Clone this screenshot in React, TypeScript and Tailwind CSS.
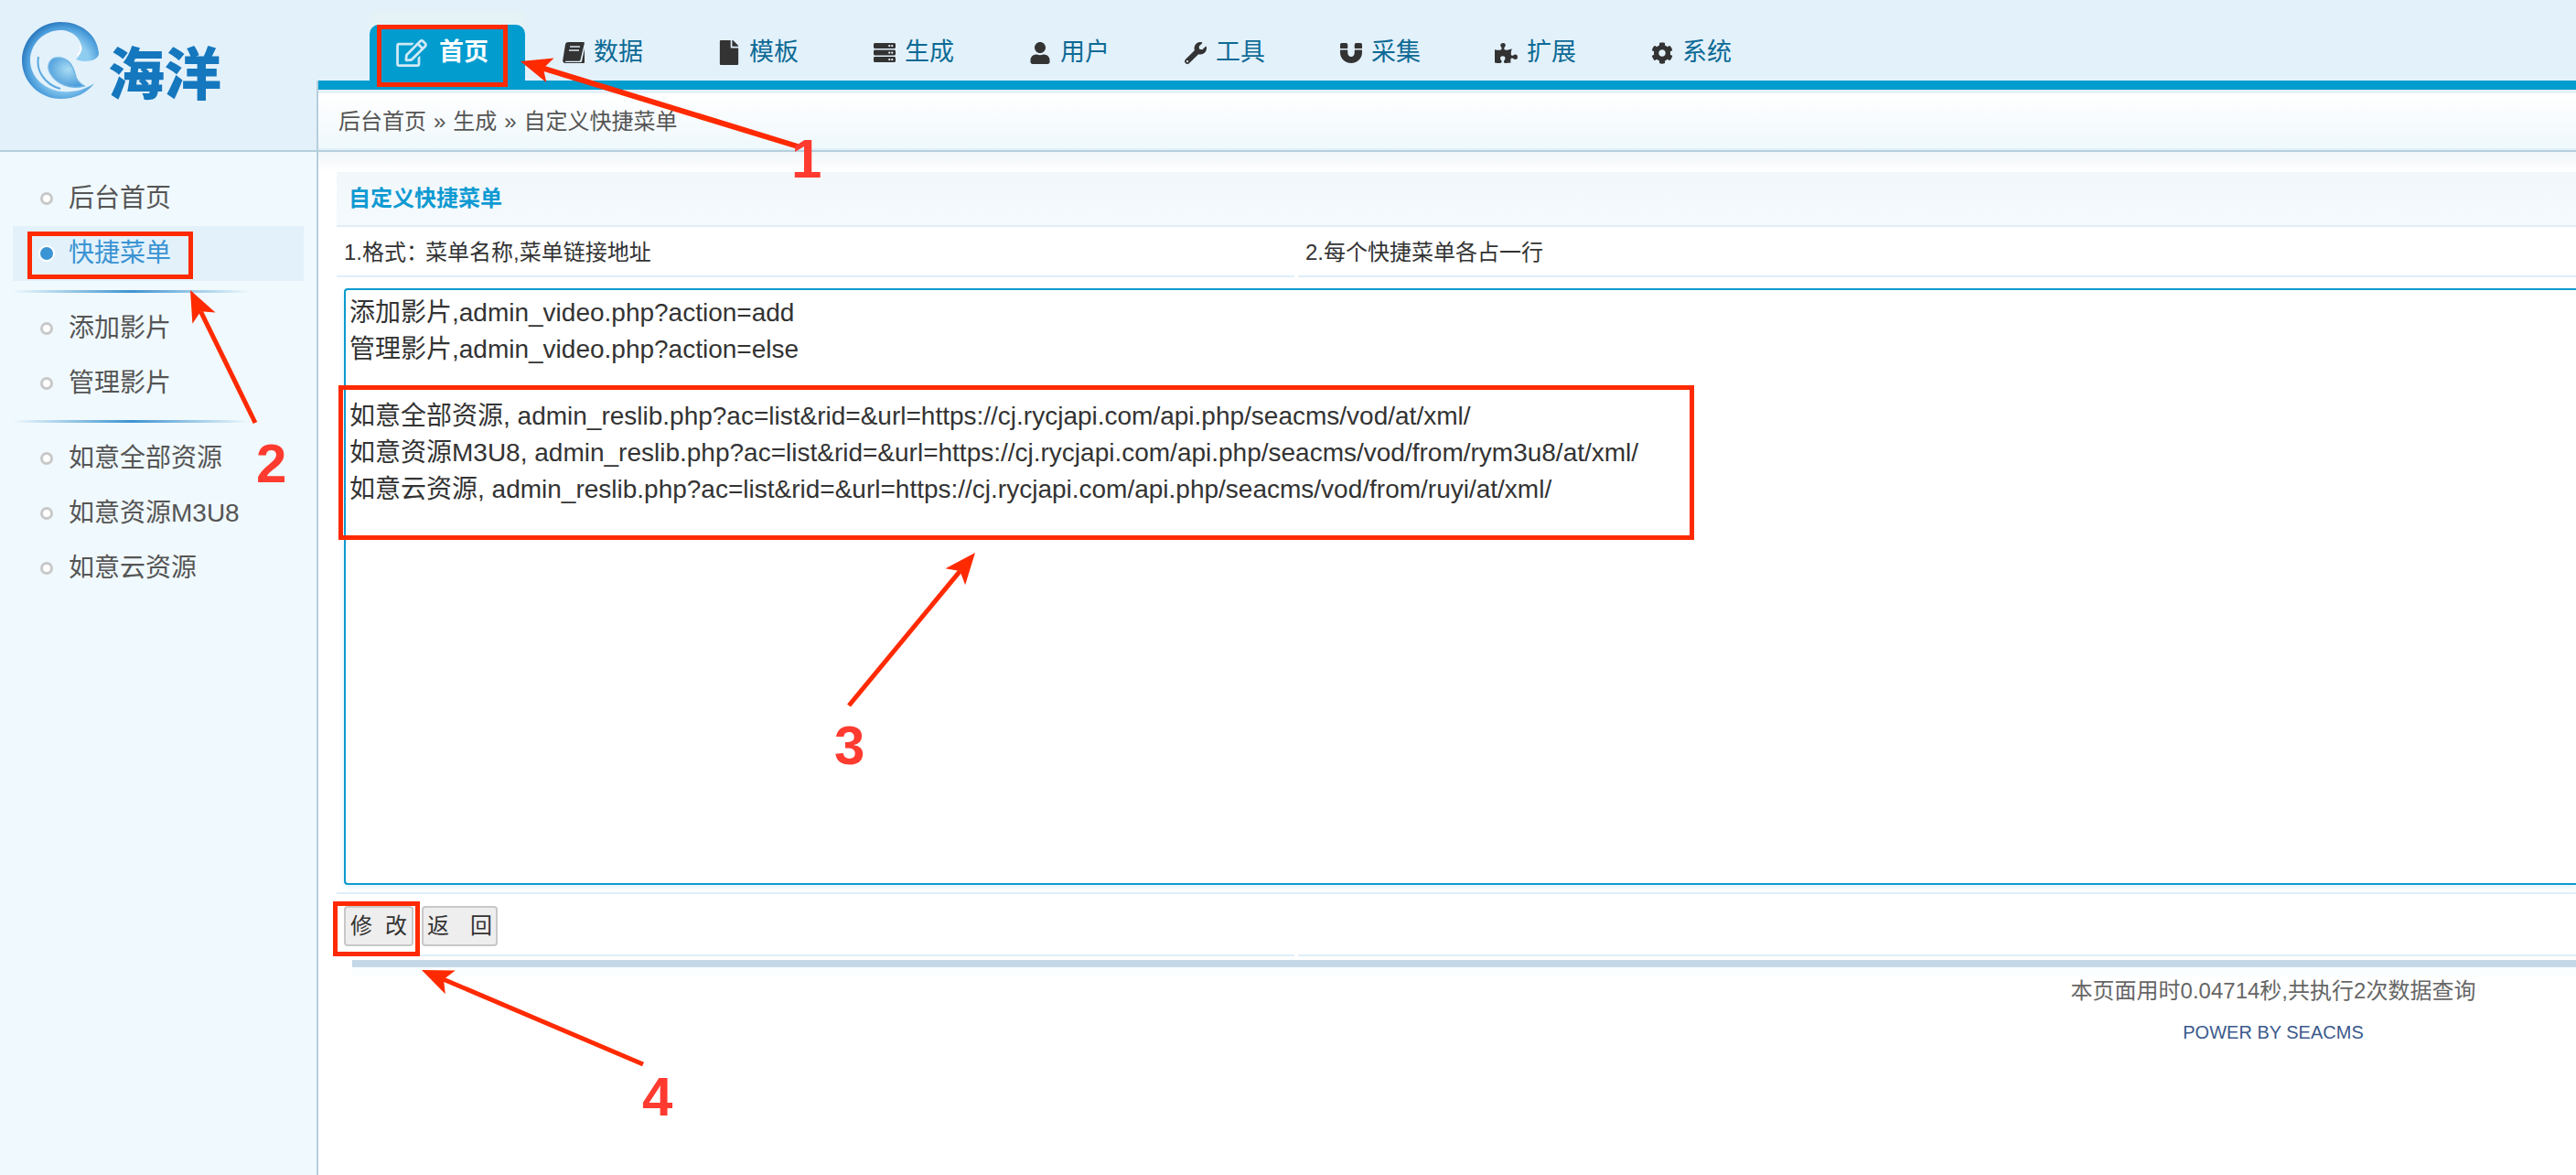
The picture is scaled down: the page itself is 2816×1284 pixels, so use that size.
import type { ReactNode } from 'react'
import { FaCog, FaFile, FaMagnet, FaPuzzlePiece, FaRegEdit, FaServer, FaUser, FaWrench } from 'react-icons/fa'

const FONT = 'font-["Liberation_Sans","Noto_Sans_CJK_SC",sans-serif]'

function BookIcon() {
  return (
    <svg viewBox="0 0 24 24" className="h-[24px] w-[24px]" fill="#333">
      <path d="M6 0h17c1 0 1 1 .8 1.6L19.500 19.500c-.2.8-.8 1.200-1.500 1.200H4c-1 0-1.500.8-1 1.300h16.500c.8 0 1.300-.4 1.500-1l3-14v15c0 1-.8 1-1.500 1H3c-2 0-3-1.500-2.800-3L3 2.500C3.300 1 4.500 0 6 0z" />
      <path d="M8 5h11M7 9h11" stroke="#d9e6ee" strokeWidth="1.500" />
    </svg>
  )
}

const navItems: { label: string; icon: ReactNode }[] = [
  { label: '数据', icon: <BookIcon /> },
  { label: '模板', icon: <FaFile className="h-[27px] w-[24px]" /> },
  { label: '生成', icon: <FaServer className="h-[27px] w-[24px]" /> },
  { label: '用户', icon: <FaUser className="h-[24px] w-[22px]" /> },
  { label: '工具', icon: <FaWrench className="h-[24px] w-[24px]" /> },
  { label: '采集', icon: <FaMagnet className="h-[24px] w-[24px]" /> },
  { label: '扩展', icon: <FaPuzzlePiece className="h-[24px] w-[26px]" /> },
  { label: '系统', icon: <FaCog className="h-[24px] w-[24px]" /> },
]

const sideGroups = [['后台首页', '快捷菜单'], ['添加影片', '管理影片'], ['如意全部资源', '如意资源M3U8', '如意云资源']]

function Logo() {
  return (
    <div className="flex pl-[22px] pt-[22px]">
      <svg viewBox="0 0 90 90" className="h-[90px] w-[90px] shrink-0">
        <defs>
          <radialGradient id="swirl" cx="0.55" cy="0.55" r="0.6">
            <stop offset="0.55" stopColor="#8fcdf0" />
            <stop offset="0.8" stopColor="#4b9ddb" />
            <stop offset="1" stopColor="#1c68b0" />
          </radialGradient>
          <radialGradient id="drop" cx="0.55" cy="0.4" r="0.7">
            <stop offset="0" stopColor="#a9dcf5" />
            <stop offset="1" stopColor="#3f93d6" />
          </radialGradient>
        </defs>
        <path
          d="M86 36C84 15 66 2 44 2 20 2 2 22 2 44c0 24 20 42 42 42 16 0 29-6 37-17-10 7-22 10-34 9C27 77 11 62 11 44c0-18 15-33 33-33 12 0 22 8 23 18 .5 6-3 11-6 14 9 4 25 2 25-7z"
          fill="url(#swirl)"
        />
        <path d="M63 38c3-3 4-7 3-10" stroke="#ffffff" strokeWidth="2" fill="none" strokeLinecap="round" />
        <path
          d="M70 72C55 76 40 70 33 58c-5-9 0-18 10-17 10 1 15 10 17 18 1 6 5 10 10 13z"
          fill="url(#drop)"
          stroke="#6fb5e4"
          strokeWidth="1.500"
        />
        <path d="M20 40c-3 14 6 30 24 35" stroke="#5aa8e0" strokeWidth="2" fill="none" />
      </svg>
      <span className='ml-[6px] mt-[17px] font-["Noto_Sans_CJK_SC",sans-serif] text-[62px] leading-[76px] font-black text-[#1577be]'>海洋</span>
    </div>
  )
}

function Arrow({ tipX, tipY, tailX, tailY, width = 5 }: { tipX: number; tipY: number; tailX: number; tailY: number; width?: number }) {
  const len = Math.hypot(tailX - tipX, tailY - tipY)
  const ux = (tailX - tipX) / len
  const uy = (tailY - tipY) / len
  const backX = tipX + ux * 34
  const backY = tipY + uy * 34
  const neckX = tipX + ux * 26
  const neckY = tipY + uy * 26
  const points = [
    `${tipX},${tipY}`,
    `${backX - uy * 14},${backY + ux * 14}`,
    `${neckX},${neckY}`,
    `${backX + uy * 14},${backY - ux * 14}`,
  ].join(' ')
  return (
    <g fill="#ff2a00" stroke="#ff2a00">
      <line x1={neckX} y1={neckY} x2={tailX} y2={tailY} strokeWidth={width} />
      <polygon points={points} stroke="none" />
    </g>
  )
}

function Annotations() {
  return (
    <>
      <div className="absolute left-[412px] top-[27px] h-[68px] w-[143px] border-[5px] border-[#ff2a00]" />
      <div className="absolute left-[30px] top-[253px] h-[52px] w-[181px] border-[5px] border-[#ff2a00]" />
      <div className="absolute left-[370px] top-[421px] h-[169px] w-[1482px] border-[5px] border-[#ff2a00]" />
      <div className="absolute left-[364px] top-[985px] h-[60px] w-[95px] border-[5px] border-[#ff2a00]" />
      <svg className="pointer-events-none absolute left-0 top-0 h-[1284px] w-[2816px]">
        <Arrow tipX={569} tipY={67} tailX={872} tailY={160} width={6} />
        <Arrow tipX={208} tipY={317} tailX={279} tailY={462} />
        <Arrow tipX={1066} tipY={604} tailX={928} tailY={771} />
        <Arrow tipX={461} tipY={1060} tailX={703} tailY={1163} />
      </svg>
      <span className="absolute left-[865px] top-[140px] text-[60px] leading-[68px] font-bold text-[#ff3b30]">1</span>
      <span className="absolute left-[280px] top-[473px] text-[60px] leading-[68px] font-bold text-[#ff3b30]">2</span>
      <span className="absolute left-[912px] top-[781px] text-[60px] leading-[68px] font-bold text-[#ff3b30]">3</span>
      <span className="absolute left-[702px] top-[1165px] text-[60px] leading-[68px] font-bold text-[#ff3b30]">4</span>
    </>
  )
}

export default function App() {
  return (
    <div className={`relative h-[1284px] w-full overflow-hidden bg-white ${FONT}`}>
      <header className="flex h-[166px] border-b-2 border-[#b5cfdc] bg-[#e3f1fb]">
        <div className="w-[346px] shrink-0">
          <Logo />
        </div>
        <div className="flex min-w-0 flex-1 flex-col">
          <nav className="relative flex h-[88px] items-end pl-[58px]">
            <div className="absolute left-[58px] top-[12px] h-[20px] w-[170px] bg-[#e6f3f6]" />
            <a className="relative flex h-[61px] w-[170px] items-center rounded-t-[10px] bg-[#029ccf] pl-[28px] text-[27px] font-bold text-white">
              <FaRegEdit className="mr-[12px] h-[30px] w-[36px] shrink-0 text-[#cfe9f5]" />
              首页
            </a>
            {navItems.map((item) => (
              <a key={item.label} className="flex h-[61px] w-[170px] items-center pl-[40px] text-[27px] text-[#0d6a94]">
                <span className="mr-[10px] flex w-[25px] shrink-0 justify-center text-[#333]">{item.icon}</span>
                {item.label}
              </a>
            ))}
          </nav>
          <div className="flex-1 border-l-2 border-[#b5cfdc]">
            <div className="h-[10px] bg-[#029ccf]" />
            <div className="mt-[4px] flex h-[60px] items-center bg-gradient-to-b from-white to-[#eff8fc] pl-[22px] pt-[2px] text-[24px] text-[#555] [word-spacing:1.3px]">
              后台首页 » 生成 » 自定义快捷菜单
            </div>
          </div>
        </div>
      </header>

      <div className="flex h-[1118px]">
        <aside className="w-[348px] shrink-0 border-r-2 border-[#b5cfdc] bg-[#f0f9fd] pt-[21px]">
          {sideGroups.map((group, groupIndex) => (
            <div key={groupIndex}>
              {groupIndex > 0 && (
                <div className="mb-[9px] ml-[14px] mt-[10px] h-[3px] w-[259px] bg-gradient-to-r from-transparent via-[#3f94d0] to-transparent" />
              )}
              {group.map((label) => {
                const active = label === '快捷菜单'
                return (
                  <div
                    key={label}
                    className={`mx-[14px] flex h-[60px] items-center pl-[30px] text-[28px] ${active ? 'bg-[#e3f1fb] text-[#3b94d3]' : 'text-[#555]'}`}
                  >
                    <span
                      className={
                        active
                          ? 'mr-[17px] h-[14px] w-[14px] rounded-full bg-[#3b94d3] ring-2 ring-white'
                          : 'mr-[17px] h-[14px] w-[14px] rounded-full border-[3px] border-[#c8c8c8] bg-white'
                      }
                    />
                    {label}
                  </div>
                )
              })}
            </div>
          ))}
        </aside>

        <main className="min-w-0 flex-1 pl-[20px]">
          <div className="-ml-[20px] h-[22px] bg-gradient-to-b from-[#f0f6f9] to-white" />
          <div className="flex h-[60px] items-center border-b-2 border-[#dfeefa] bg-gradient-to-b from-[#f2f7fb] to-[#f5fafe] pl-[13px] text-[24px] font-bold text-[#0f9ad2]">
            自定义快捷菜单
          </div>
          <div className="flex h-[55px] text-[24px] text-[#333]">
            <div className="flex w-[1047px] items-center border-b-2 border-[#dfeefa] pl-[8px] pt-[2px]">
              1.格式：<span className="-ml-[3px]">菜单名称,菜单链接地址</span>
            </div>
            <div className="ml-[4px] flex flex-1 items-center border-b-2 border-[#dfeefa] pl-[8px] pt-[2px]">2.每个快捷菜单各占一行</div>
          </div>
          <div className="ml-[8px] mt-[12px] h-[652px] rounded-l-[4px] border-2 border-r-0 border-[#0d9ad0] pl-[4px] pt-[5px] text-[28px] leading-[40px] text-[#333] shadow-[0_3px_6px_rgba(13,154,208,0.12)]">
            <div>添加影片,admin_video.php?action=add</div>
            <div>管理影片,admin_video.php?action=else</div>
            <div className="h-[33px]" />
            <div>如意全部资源, admin_reslib.php?ac=list&amp;rid=&amp;url=https://cj.rycjapi.com/api.php/seacms/vod/at/xml/</div>
            <div>如意资源M3U8, admin_reslib.php?ac=list&amp;rid=&amp;url=https://cj.rycjapi.com/api.php/seacms/vod/from/rym3u8/at/xml/</div>
            <div>如意云资源, admin_reslib.php?ac=list&amp;rid=&amp;url=https://cj.rycjapi.com/api.php/seacms/vod/from/ruyi/at/xml/</div>
          </div>
          <div className="mt-[8px] h-[2px] bg-[#dfeefa]" />
          <div className="flex h-[68px]">
            <div className="flex w-[1047px] gap-[9px] border-b-2 border-[#dfeefa] pl-[8px] pt-[13px]">
              <button type="button" className="flex h-[44px] w-[76px] items-center justify-between rounded-[4px] border-2 border-[#c8c8c8] bg-[#efeeee] px-[5px] text-[24px] text-[#333]">
                <span>修</span>
                <span>改</span>
              </button>
              <button type="button" className="flex h-[44px] w-[83px] items-center justify-between rounded-[4px] border-2 border-[#c8c8c8] bg-[#efeeee] px-[4px] text-[24px] text-[#333]">
                <span>返</span>
                <span>回</span>
              </button>
            </div>
            <div className="ml-[4px] flex-1 border-b-2 border-[#dfeefa]" />
          </div>
          <div className="ml-[17px] mt-[4px] h-[8px] bg-[#c4d8e7]" />
          <div className="ml-[17px] h-[10px] bg-[#fbfeff]" />
          <div className="ml-auto w-[662px] text-center">
            <p className="h-[32px] text-[24px] leading-[32px] text-[#666]">本页面用时0.04714秒,共执行2次数据查询</p>
            <p className="mt-[13px] h-[32px] text-[20px] leading-[32px] text-[#3b5a8c]">POWER BY SEACMS</p>
          </div>
        </main>
      </div>

      <Annotations />
    </div>
  )
}
